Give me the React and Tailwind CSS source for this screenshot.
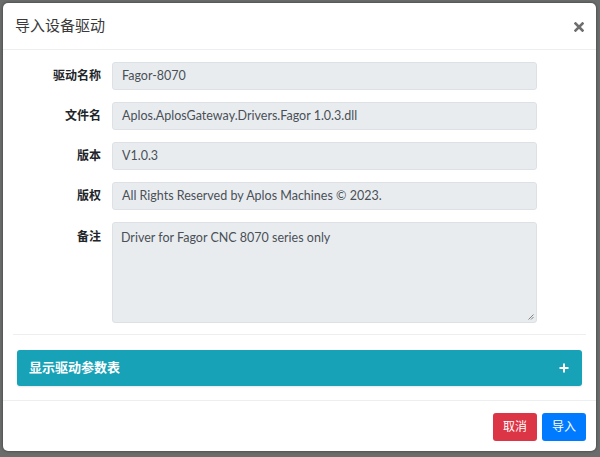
// Import device driver modal (Bootstrap-like look)
const fields = [
  { label: '驱动名称', value: 'Fagor-8070' },
  { label: '文件名', value: 'Aplos.AplosGateway.Drivers.Fagor 1.0.3.dll' },
  { label: '版本', value: 'V1.0.3' },
  { label: '版权', value: 'All Rights Reserved by Aplos Machines © 2023.' },
]

const font = "font-['Inter','Noto_Sans_CJK_SC',sans-serif]"
const inputFont = "font-['Lato','Noto_Sans_CJK_SC',sans-serif]"

export default function App() {
  return (
    <div className={`w-[600px] h-[457px] bg-[#6b6c6c] pt-[3px] pl-[3px] overflow-hidden ${font}`}>
      <div className="w-[593px] h-[448px] bg-white rounded-[5px] flex flex-col shadow-[0_0_3px_rgba(0,0,0,0.5)]">
        {/* Header */}
        <div className="h-[47px] flex items-center justify-between px-[12px] border-b border-[#eceeef]">
          <h5 className="text-[15px] text-[#3a3a3a]">导入设备驱动</h5>
          <svg width="10" height="10" viewBox="0 0 10 10" className="mt-[1px]">
            <path d="M1.5 1.5 L8.5 8.5 M8.5 1.5 L1.5 8.5" stroke="#6f6f6f" strokeWidth="2.6" strokeLinecap="square" />
          </svg>
        </div>

        {/* Body */}
        <div className="px-[10px] pt-[12px]">
          <div className="flex flex-col gap-[12px]">
            {fields.map(({ label, value }) => (
              <div key={label} className="flex items-center">
                <label className="w-[88px] text-right text-[12px] font-bold text-[#212529]">{label}</label>
                <div className={`ml-[11px] w-[425px] h-[28px] bg-[#e9ecef] border border-[#dde1e5] rounded-[3px] flex items-center px-[9px] text-[12.5px] text-[#495057] ${inputFont}`}>
                  {value}
                </div>
              </div>
            ))}
            <div className="flex items-start">
              <label className="w-[88px] text-right text-[12px] font-bold text-[#212529] pt-[6px]">备注</label>
              <div className={`ml-[11px] w-[425px] h-[101px] bg-[#e9ecef] border border-[#dde1e5] rounded-[3px] px-[8px] pt-[6px] text-[12.5px] text-[#495057] relative ${inputFont}`}>
                Driver for Fagor CNC 8070 series only
                <svg width="6" height="6" viewBox="0 0 6 6" className="absolute right-[2px] bottom-[2px]">
                  <path d="M5.5 0.5 L0.5 5.5 M5.5 3 L3 5.5" stroke="#777" strokeWidth="0.9" />
                </svg>
              </div>
            </div>
          </div>

          <div className="mt-[11px] border-t border-[#eceeef]" />

          {/* Accordion */}
          <div className="mt-[15px] mx-[4px] h-[36px] bg-[#17a2b8] rounded-[3px] flex items-center justify-between pl-[12px] pr-[13px] shadow-[0_1px_2px_rgba(0,0,0,0.1)]">
            <span className="text-[13px] font-bold text-white">显示驱动参数表</span>
            <svg width="10" height="10" viewBox="0 0 10 10">
              <path d="M5 0.5 V9.5 M0.5 5 H9.5" stroke="#ffffff" strokeWidth="2" />
            </svg>
          </div>
        </div>

        {/* Footer */}
        <div className="mt-[14px] border-t border-[#eceeef] flex-1 flex items-start justify-end gap-[5px] pt-[12px] pr-[10px]">
          <button className="w-[44px] h-[28px] rounded-[3px] bg-[#dc3545] text-white text-[12px]">取消</button>
          <button className="w-[44px] h-[28px] rounded-[3px] bg-[#007bff] text-white text-[12px]">导入</button>
        </div>
      </div>
    </div>
  )
}
